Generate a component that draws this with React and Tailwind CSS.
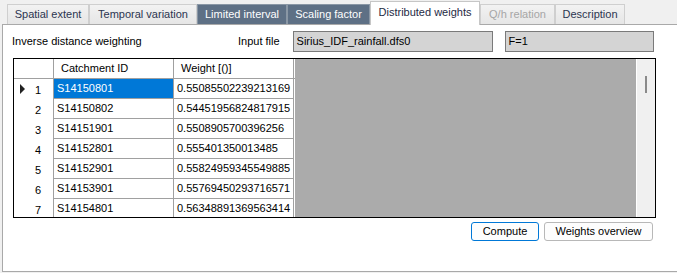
import React from "react";

const rows = [
  ["S14150801", "0.55085502239213169"],
  ["S14150802", "0.54451956824817915"],
  ["S14151901", "0.5508905700396256"],
  ["S14152801", "0.555401350013485"],
  ["S14152901", "0.55824959345549885"],
  ["S14153901", "0.55769450293716571"],
  ["S14154801", "0.56348891369563414"],
];

function Tab({ label, w, kind }) {
  if (kind === "selected") {
    return (
      <div
        className="relative z-10 h-[24px] -mb-[1px] flex items-center justify-center bg-white border border-b-0 border-[#c6c6c6] text-[#1e2a44]"
        style={{ width: w }}
      >
        <span className="-mt-[3px]">{label}</span>
      </div>
    );
  }
  if (kind === "dark") {
    return (
      <div
        className="h-[20px] flex items-center justify-center bg-[#5e7085] border border-b-0 border-[#8a97a5] text-white"
        style={{ width: w }}
      >
        {label}
      </div>
    );
  }
  return (
    <div
      className={
        "h-[20px] flex items-center justify-center bg-gradient-to-b from-[#f2f2f2] to-[#e6e6e6] border border-b-0 border-[#cfcfcf] " +
        (kind === "disabled" ? "text-[#a6a6a6]" : "text-[#2b3550]")
      }
      style={{ width: w }}
    >
      {label}
    </div>
  );
}

export default function App() {
  return (
    <div
      className="w-[677px] h-[273px] bg-[#f0f0f0] text-[11px] text-black overflow-hidden"
      style={{ fontFamily: '"Liberation Sans", Arial, sans-serif' }}
    >
      <div className="flex items-end h-[24px] pl-[7px] pt-[1px]">
        <Tab label="Spatial extent" w={82} />
        <Tab label="Temporal variation" w={108} />
        <Tab label="Limited interval" w={90} kind="dark" />
        <Tab label="Scaling factor" w={83} kind="dark" />
        <Tab label="Distributed weights" w={110} kind="selected" />
        <Tab label="Q/h relation" w={75} kind="disabled" />
        <Tab label="Description" w={70} />
      </div>
      <div className="ml-[2px] h-[248px] bg-white border-l border-t border-b border-[#a9a9a9] flex flex-col pl-[9px] pr-[23px] pt-[6px]">
        <div className="flex items-center h-[21px] whitespace-nowrap">
          <span className="w-[130px] shrink-0">Inverse distance weighting</span>
          <span className="ml-[96px] shrink-0">Input file</span>
          <div className="ml-[13px] shrink-0 w-[200px] h-[21px] bg-[#d4d4d4] border border-[#7a7a7a] px-[3px] pt-[2px] leading-[14px] self-start">
            Sirius_IDF_rainfall.dfs0
          </div>
          <div className="ml-[12px] shrink-0 w-[149px] h-[21px] bg-[#d4d4d4] border border-[#7a7a7a] px-[3px] pt-[2px] leading-[14px] self-start">
            F=1
          </div>
        </div>
        <div className="mt-[6px] ml-[1px] w-[643px] h-[160px] border border-black flex overflow-hidden">
          <div className="flex flex-col w-[281px] shrink-0 bg-white">
            <div className="flex h-[20px] shrink-0 border-b border-[#a0a0a0]">
              <div className="w-[40px] border-r border-[#a0a0a0]" />
              <div className="w-[120px] border-r border-[#a0a0a0] pl-[7px] flex items-center">Catchment ID</div>
              <div className="w-[120px] border-r border-[#a0a0a0] pl-[7px] flex items-center">Weight [()]</div>
            </div>
            {rows.map((r, i) => (
              <div key={i} className="flex h-[20px] shrink-0">
                <div className="w-[40px] border-r border-[#a0a0a0] relative flex items-center">
                  {i === 0 && (
                    <svg className="absolute left-[6px] top-[5px]" width="6" height="10" viewBox="0 0 6 10">
                      <path d="M0 0 L5 5 L0 10 Z" fill="#222" />
                    </svg>
                  )}
                  <span className="w-full text-center pl-[9px] pt-[2px]">{i + 1}</span>
                </div>
                <div
                  className={
                    "w-[120px] border-r border-b border-[#a0a0a0] pl-[3px] flex items-center " +
                    (i === 0 ? "bg-[#0078d7] text-white" : "")
                  }
                >
                  {r[0]}
                </div>
                <div className="w-[120px] border-r border-b border-[#a0a0a0] pl-[3px] flex items-center">{r[1]}</div>
              </div>
            ))}
          </div>
          <div className="w-[342px] shrink-0 bg-[#ababab] border-r border-white" />
          <div className="flex-1 bg-[#f0f0f0] relative">
            <div className="absolute left-[8px] top-[17px] w-[2px] h-[17px] bg-[#8a8a8a]" />
          </div>
        </div>
        <div className="flex justify-end gap-[5px] mt-[4px] pr-[1px]">
          <button className="w-[68px] h-[19px] rounded-[3px] border border-[#0078d7] bg-[#fdfdfd] flex items-center justify-center leading-none">
            Compute
          </button>
          <button className="w-[109px] h-[19px] rounded-[3px] border border-[#b8b8b8] bg-[#fdfdfd] flex items-center justify-center leading-none">
            Weights overview
          </button>
        </div>
      </div>
    </div>
  );
}
